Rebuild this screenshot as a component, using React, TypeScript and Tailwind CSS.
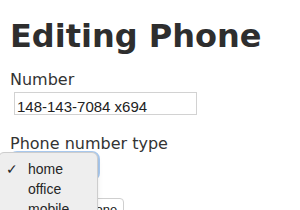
import React from 'react';

const types = ['home', 'office', 'mobile'];

export default function App() {
  return (
    <div className="relative h-[210px] w-[300px] overflow-hidden bg-white text-[#333] font-['DejaVu_Sans',sans-serif]">
      <div className="pl-[10px] pt-[20px]">
        <h1 className="text-[32px] font-bold leading-[32px] text-[#2e2e2e]">Editing Phone</h1>

        <form className="mt-[18px]">
          <label className="block text-[16px] leading-[20px]">Number</label>
          <input
            readOnly
            value="148-143-7084 x694"
            className="mt-[2px] ml-[4px] block h-[23px] w-[183px] border border-[#d2d2d2] bg-white pl-[2px] pt-[5px] pb-0 text-[15px] leading-[16px] text-[#222] font-['Liberation_Sans',sans-serif] outline-none"
          />

          <label className="mt-[19px] block text-[16px] leading-[20px]">Phone number type</label>
          {/* select behind the open menu */}
          <div className="ml-[2px] h-[24px] w-[85px] rounded-[5px] border border-[#bbb] bg-white ring-[3px] ring-[#a9c9ee]" />

          <button
            type="button"
            className="mt-[20px] ml-[17px] rounded-[4px] border border-[#cfcfcf] bg-white px-[6px] py-[2px] text-[13px] leading-[18px] text-[#222] font-['Liberation_Sans',sans-serif]"
          >
            Update Phone
          </button>
        </form>
      </div>

      {/* open option list */}
      <div className="absolute left-[-2px] top-[152px] z-10 w-[100px] rounded-[6px] border border-[#cdcdcd] bg-[#eeeeee] pt-[6px] pb-[4px] shadow-md font-['Liberation_Sans',sans-serif] text-[14px] leading-[20px] text-[#262626]">
        {types.map((t, i) => (
          <div key={t} className="relative pl-[29px]">
            {i === 0 && (
              <span className="absolute left-[7px] top-0 text-[14px]">✓</span>
            )}
            {t}
          </div>
        ))}
      </div>
    </div>
  );
}
